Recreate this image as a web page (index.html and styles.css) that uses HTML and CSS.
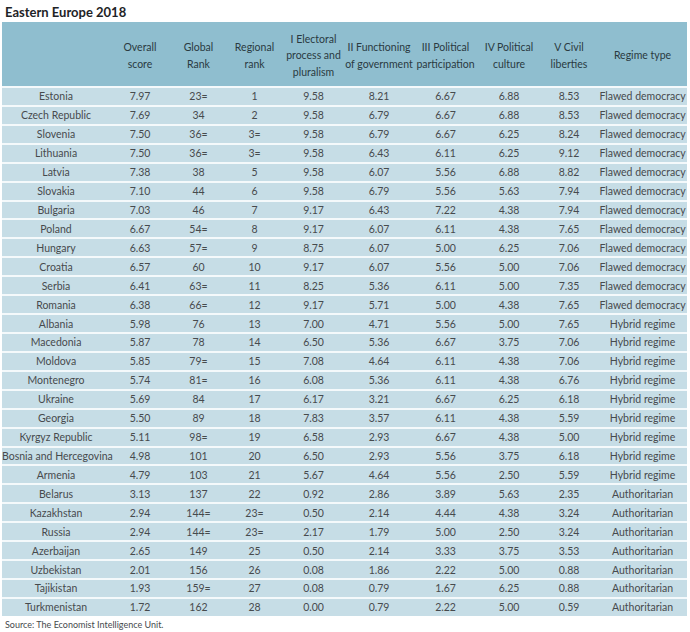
FILE: index.html
```html
<!DOCTYPE html>
<html lang="en">
<head>
<meta charset="utf-8">
<title>Eastern Europe 2018</title>
<link rel="stylesheet" href="styles.css">
</head>
<body>
<div class="page">
  <h1 class="title">Eastern Europe 2018</h1>
  <table class="dtable">
    <colgroup>
      <col class="c-country"><col class="c-overall"><col class="c-global"><col class="c-regional"><col class="c-elect"><col class="c-func"><col class="c-part"><col class="c-cult"><col class="c-civil"><col class="c-regime">
    </colgroup>
    <thead>
      <tr>
        <th></th>
        <th>Overall<br>score</th>
        <th>Global<br>Rank</th>
        <th>Regional<br>rank</th>
        <th>I Electoral<br>process and<br>pluralism</th>
        <th>II Functioning<br>of government</th>
        <th>III Political<br>participation</th>
        <th>IV Political<br>culture</th>
        <th>V Civil<br>liberties</th>
        <th>Regime type</th>
      </tr>
    </thead>
    <tbody>
      <tr><td>Estonia</td><td>7.97</td><td>23=</td><td>1</td><td>9.58</td><td>8.21</td><td>6.67</td><td>6.88</td><td>8.53</td><td>Flawed democracy</td></tr>
      <tr><td>Czech Republic</td><td>7.69</td><td>34</td><td>2</td><td>9.58</td><td>6.79</td><td>6.67</td><td>6.88</td><td>8.53</td><td>Flawed democracy</td></tr>
      <tr><td>Slovenia</td><td>7.50</td><td>36=</td><td>3=</td><td>9.58</td><td>6.79</td><td>6.67</td><td>6.25</td><td>8.24</td><td>Flawed democracy</td></tr>
      <tr><td>Lithuania</td><td>7.50</td><td>36=</td><td>3=</td><td>9.58</td><td>6.43</td><td>6.11</td><td>6.25</td><td>9.12</td><td>Flawed democracy</td></tr>
      <tr><td>Latvia</td><td>7.38</td><td>38</td><td>5</td><td>9.58</td><td>6.07</td><td>5.56</td><td>6.88</td><td>8.82</td><td>Flawed democracy</td></tr>
      <tr><td>Slovakia</td><td>7.10</td><td>44</td><td>6</td><td>9.58</td><td>6.79</td><td>5.56</td><td>5.63</td><td>7.94</td><td>Flawed democracy</td></tr>
      <tr><td>Bulgaria</td><td>7.03</td><td>46</td><td>7</td><td>9.17</td><td>6.43</td><td>7.22</td><td>4.38</td><td>7.94</td><td>Flawed democracy</td></tr>
      <tr><td>Poland</td><td>6.67</td><td>54=</td><td>8</td><td>9.17</td><td>6.07</td><td>6.11</td><td>4.38</td><td>7.65</td><td>Flawed democracy</td></tr>
      <tr><td>Hungary</td><td>6.63</td><td>57=</td><td>9</td><td>8.75</td><td>6.07</td><td>5.00</td><td>6.25</td><td>7.06</td><td>Flawed democracy</td></tr>
      <tr><td>Croatia</td><td>6.57</td><td>60</td><td>10</td><td>9.17</td><td>6.07</td><td>5.56</td><td>5.00</td><td>7.06</td><td>Flawed democracy</td></tr>
      <tr><td>Serbia</td><td>6.41</td><td>63=</td><td>11</td><td>8.25</td><td>5.36</td><td>6.11</td><td>5.00</td><td>7.35</td><td>Flawed democracy</td></tr>
      <tr><td>Romania</td><td>6.38</td><td>66=</td><td>12</td><td>9.17</td><td>5.71</td><td>5.00</td><td>4.38</td><td>7.65</td><td>Flawed democracy</td></tr>
      <tr><td>Albania</td><td>5.98</td><td>76</td><td>13</td><td>7.00</td><td>4.71</td><td>5.56</td><td>5.00</td><td>7.65</td><td>Hybrid regime</td></tr>
      <tr><td>Macedonia</td><td>5.87</td><td>78</td><td>14</td><td>6.50</td><td>5.36</td><td>6.67</td><td>3.75</td><td>7.06</td><td>Hybrid regime</td></tr>
      <tr><td>Moldova</td><td>5.85</td><td>79=</td><td>15</td><td>7.08</td><td>4.64</td><td>6.11</td><td>4.38</td><td>7.06</td><td>Hybrid regime</td></tr>
      <tr><td>Montenegro</td><td>5.74</td><td>81=</td><td>16</td><td>6.08</td><td>5.36</td><td>6.11</td><td>4.38</td><td>6.76</td><td>Hybrid regime</td></tr>
      <tr><td>Ukraine</td><td>5.69</td><td>84</td><td>17</td><td>6.17</td><td>3.21</td><td>6.67</td><td>6.25</td><td>6.18</td><td>Hybrid regime</td></tr>
      <tr><td>Georgia</td><td>5.50</td><td>89</td><td>18</td><td>7.83</td><td>3.57</td><td>6.11</td><td>4.38</td><td>5.59</td><td>Hybrid regime</td></tr>
      <tr><td>Kyrgyz Republic</td><td>5.11</td><td>98=</td><td>19</td><td>6.58</td><td>2.93</td><td>6.67</td><td>4.38</td><td>5.00</td><td>Hybrid regime</td></tr>
      <tr><td>Bosnia and Hercegovina</td><td>4.98</td><td>101</td><td>20</td><td>6.50</td><td>2.93</td><td>5.56</td><td>3.75</td><td>6.18</td><td>Hybrid regime</td></tr>
      <tr><td>Armenia</td><td>4.79</td><td>103</td><td>21</td><td>5.67</td><td>4.64</td><td>5.56</td><td>2.50</td><td>5.59</td><td>Hybrid regime</td></tr>
      <tr><td>Belarus</td><td>3.13</td><td>137</td><td>22</td><td>0.92</td><td>2.86</td><td>3.89</td><td>5.63</td><td>2.35</td><td>Authoritarian</td></tr>
      <tr><td>Kazakhstan</td><td>2.94</td><td>144=</td><td>23=</td><td>0.50</td><td>2.14</td><td>4.44</td><td>4.38</td><td>3.24</td><td>Authoritarian</td></tr>
      <tr><td>Russia</td><td>2.94</td><td>144=</td><td>23=</td><td>2.17</td><td>1.79</td><td>5.00</td><td>2.50</td><td>3.24</td><td>Authoritarian</td></tr>
      <tr><td>Azerbaijan</td><td>2.65</td><td>149</td><td>25</td><td>0.50</td><td>2.14</td><td>3.33</td><td>3.75</td><td>3.53</td><td>Authoritarian</td></tr>
      <tr><td>Uzbekistan</td><td>2.01</td><td>156</td><td>26</td><td>0.08</td><td>1.86</td><td>2.22</td><td>5.00</td><td>0.88</td><td>Authoritarian</td></tr>
      <tr><td>Tajikistan</td><td>1.93</td><td>159=</td><td>27</td><td>0.08</td><td>0.79</td><td>1.67</td><td>6.25</td><td>0.88</td><td>Authoritarian</td></tr>
      <tr><td>Turkmenistan</td><td>1.72</td><td>162</td><td>28</td><td>0.00</td><td>0.79</td><td>2.22</td><td>5.00</td><td>0.59</td><td>Authoritarian</td></tr>
    </tbody>
  </table>
  <p class="source">Source: The Economist Intelligence Unit.</p>
</div>
</body>
</html>
```
FILE: styles.css
```css
html, body {
  margin: 0;
  padding: 0;
  background: #ffffff;
}

.page {
  width: 690px;
  font-family: Lato, "Open Sans", "Liberation Sans", sans-serif;
  color: #464a4d;
}

.title {
  margin: 0;
  padding: 3px 0 0 5px;
  height: 22px;
  box-sizing: border-box;
  font-size: 13px;
  line-height: 18px;
  font-weight: 700;
  color: #1e2326;
}

.dtable {
  margin-left: 2px;
  width: 685px;
  table-layout: fixed;
  border-collapse: separate;
  border-spacing: 0;
  font-size: 10.5px;
}

.c-country { width: 108px; }
.c-overall { width: 60px; }
.c-global { width: 57px; }
.c-regional { width: 55px; }
.c-elect { width: 63px; }
.c-func { width: 68px; }
.c-part { width: 65px; }
.c-cult { width: 62px; }
.c-civil { width: 58px; }
.c-regime { width: 89px; }

.dtable th {
  background: #8fbecf;
  height: 64px;
  box-sizing: border-box;
  padding: 3px 0 0 0;
  font-weight: 400;
  font-size: 10.5px;
  line-height: 16.5px;
  color: #2a3a41;
  text-align: center;
  vertical-align: middle;
  white-space: nowrap;
}

.dtable td {
  background: #c6dde6;
  border-top: 2px solid #f4f9fb;
  height: 16.93px;
  padding: 0;
  line-height: 16px;
  text-align: center;
  vertical-align: middle;
  white-space: nowrap;
  color: #464a4d;
}

.source {
  margin: 3px 0 0 5px;
  font-size: 9px;
  line-height: 12px;
  color: #464a4d;
}
```
